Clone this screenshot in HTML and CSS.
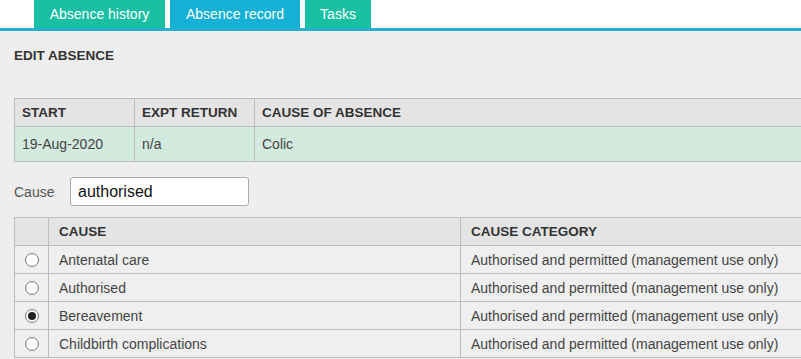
FILE: index.html
```html
<!DOCTYPE html>
<html>
  <head>
    <link rel="stylesheet" href="styles.css">
  </head>
  <body>
    <div class="tabs">
      <a class="tab">Absence history</a>
      <a class="tab active">Absence record</a>
      <a class="tab">Tasks</a>
    </div>

    <div class="panel">
      <h3 class="panel-title">EDIT ABSENCE</h3>

      <table class="grid summary">
        <tr>
          <th class="col-start">START</th>
          <th class="col-return">EXPT RETURN</th>
          <th>CAUSE OF ABSENCE</th>
        </tr>
        <tr class="current">
          <td>19-Aug-2020</td>
          <td>n/a</td>
          <td>Colic</td>
        </tr>
      </table>

      <div class="filter">
        <label for="cause">Cause</label>
        <input id="cause" type="text" value="authorised">
      </div>

      <table class="grid causes">
        <tr>
          <th class="col-pick"></th>
          <th class="col-cause">CAUSE</th>
          <th>CAUSE CATEGORY</th>
        </tr>
        <tr>
          <td class="pick"><input type="radio" name="cause"></td>
          <td>Antenatal care</td>
          <td>Authorised and permitted (management use only)</td>
        </tr>
        <tr>
          <td class="pick"><input type="radio" name="cause"></td>
          <td>Authorised</td>
          <td>Authorised and permitted (management use only)</td>
        </tr>
        <tr>
          <td class="pick"><input type="radio" name="cause" checked></td>
          <td>Bereavement</td>
          <td>Authorised and permitted (management use only)</td>
        </tr>
        <tr>
          <td class="pick"><input type="radio" name="cause"></td>
          <td>Childbirth complications</td>
          <td>Authorised and permitted (management use only)</td>
        </tr>
      </table>
    </div>
  </body>
</html>
```

FILE: styles.css
```css
body { margin: 0; font-family: "Liberation Sans", Arial, sans-serif; font-size: 14px; color: #444; background: #fff; overflow: hidden; }
.tabs { display: flex; gap: 5px; padding-left: 34px; height: 28px; }
.tab { display: flex; align-items: center; justify-content: center; height: 28px; padding: 0 15px; box-sizing: border-box; background: #19bfa2; color: #fff; font-size: 14px; text-decoration: none; }
.tab:nth-child(1) { width: 131px; }
.tab:nth-child(2) { width: 130px; }
.tab:nth-child(3) { width: 66px; }
.tab.active { background: #14b0d6; }
.panel { border-top: 3px solid #27afd1; background: #eeeeee; padding: 18px 0 0 14px; min-height: 400px; }
.panel-title { margin: 0 0 35px; font-size: 13.5px; font-weight: bold; color: #333; line-height: 14px; }
.grid { border-collapse: collapse; table-layout: fixed; width: 820px; font-size: 14px; white-space: nowrap; }
.grid th { background: #e4e4e4; color: #333; font-size: 13.5px; font-weight: bold; text-align: left; height: 27px; padding: 0 7px; border: 1px solid #bcbcbc; }
.grid td { padding: 0 7px; border: 1px solid #bcbcbc; color: #444; }
.summary td { height: 34px; }
.summary .current td { background: #d3eadf; }
.col-start { width: 105px; }
.col-return { width: 105px; }
.filter { display: flex; align-items: center; height: 29px; margin: 15px 0 11px; }
.filter label { width: 56px; color: #555; }
.filter input { width: 179px; height: 29px; box-sizing: border-box; border: 1px solid #aaa; border-radius: 3px; padding: 0 7px; font-family: "Liberation Sans", Arial, sans-serif; font-size: 16px; color: #111; background: #fff; }
.causes th, .causes td { padding: 0 10px; }
.causes td { height: 27px; background: #efefef; }
.col-pick { width: 13px; }
.col-cause { width: 391px; }
.causes td.pick { padding: 0 0 0 10px; }
.pick input { appearance: none; -webkit-appearance: none; width: 14px; height: 14px; margin: 0; border: 1px solid #777; border-radius: 50%; background: #fff; display: block; position: relative; }
.pick input:checked::after { content: ""; position: absolute; left: 2px; top: 2px; width: 8px; height: 8px; border-radius: 50%; background: #222; }
```
